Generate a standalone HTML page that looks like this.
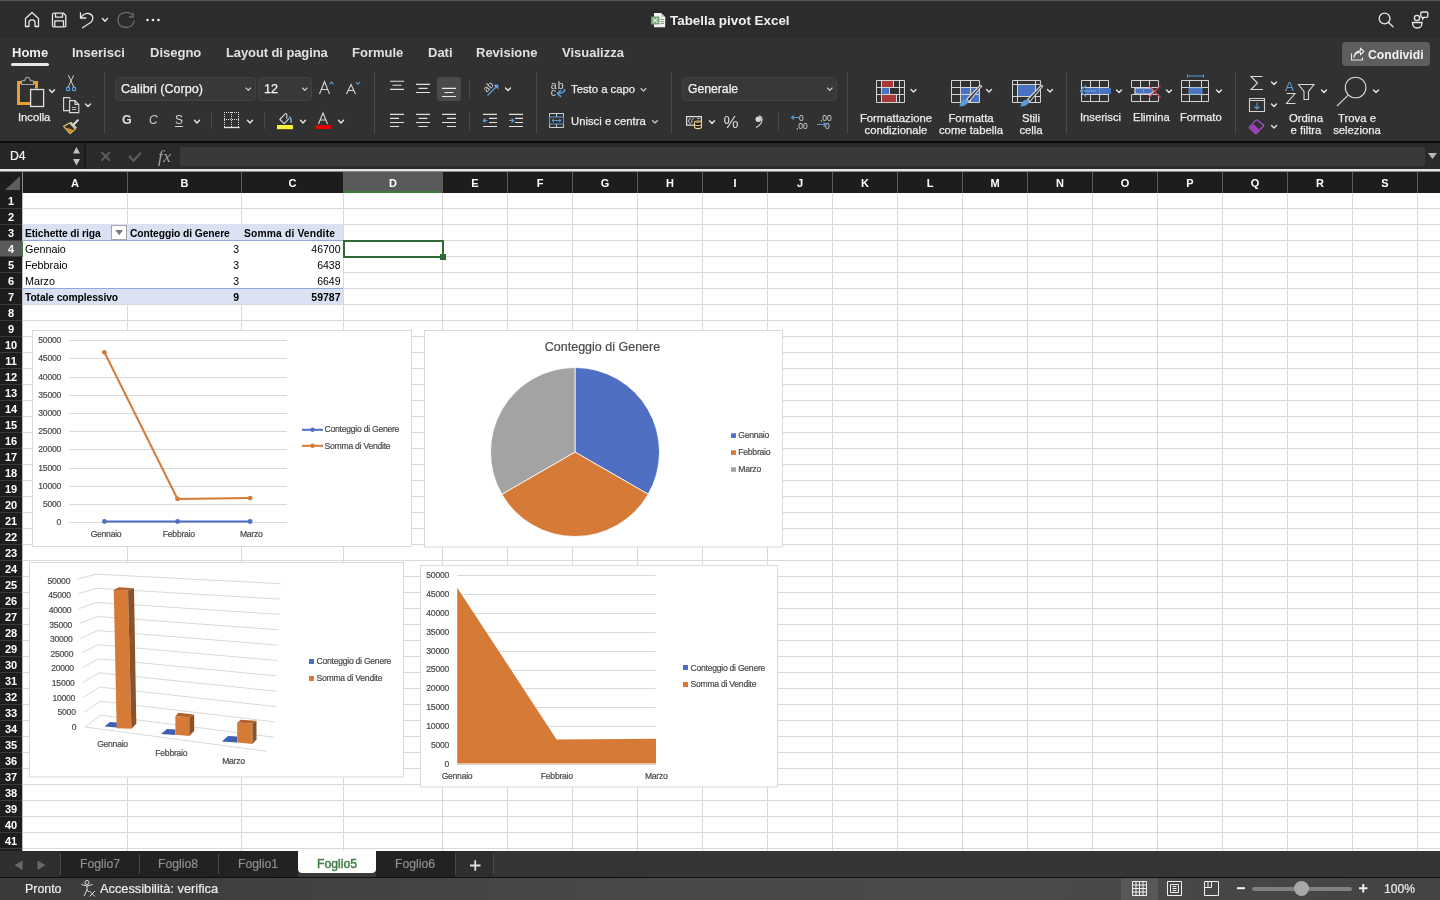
<!DOCTYPE html><html><head><meta charset="utf-8"><style>
*{margin:0;padding:0;box-sizing:border-box}
html,body{width:1440px;height:900px;overflow:hidden;background:#fff;font-family:"Liberation Sans", sans-serif}
.a{position:absolute}
.t{position:absolute;white-space:pre;line-height:1;will-change:transform}
svg{will-change:transform}
</style></head><body>
<div class="a" style="left:0;top:0;width:1440px;height:38px;background:#2c2c2c"></div>
<div class="a" style="left:0;top:0;width:1440px;height:1px;background:#555"></div>
<div class="a" style="left:0;top:38px;width:1440px;height:103px;background:#313131"></div>
<div class="a" style="left:0;top:141px;width:1440px;height:2px;background:#0c0c0c"></div>
<div class="a" style="left:0;top:143px;width:1440px;height:26px;background:#2a2a2a"></div>
<div class="a" style="left:0;top:193px;width:1440px;height:658px;background:#fff"></div>
<div class="a" style="left:23px;top:208px;width:1417px;height:1px;background:#d9d9d9"></div>
<div class="a" style="left:23px;top:224px;width:1417px;height:1px;background:#d9d9d9"></div>
<div class="a" style="left:23px;top:240px;width:1417px;height:1px;background:#d9d9d9"></div>
<div class="a" style="left:23px;top:256px;width:1417px;height:1px;background:#d9d9d9"></div>
<div class="a" style="left:23px;top:272px;width:1417px;height:1px;background:#d9d9d9"></div>
<div class="a" style="left:23px;top:288px;width:1417px;height:1px;background:#d9d9d9"></div>
<div class="a" style="left:23px;top:304px;width:1417px;height:1px;background:#d9d9d9"></div>
<div class="a" style="left:23px;top:320px;width:1417px;height:1px;background:#d9d9d9"></div>
<div class="a" style="left:23px;top:336px;width:1417px;height:1px;background:#d9d9d9"></div>
<div class="a" style="left:23px;top:352px;width:1417px;height:1px;background:#d9d9d9"></div>
<div class="a" style="left:23px;top:368px;width:1417px;height:1px;background:#d9d9d9"></div>
<div class="a" style="left:23px;top:384px;width:1417px;height:1px;background:#d9d9d9"></div>
<div class="a" style="left:23px;top:400px;width:1417px;height:1px;background:#d9d9d9"></div>
<div class="a" style="left:23px;top:416px;width:1417px;height:1px;background:#d9d9d9"></div>
<div class="a" style="left:23px;top:432px;width:1417px;height:1px;background:#d9d9d9"></div>
<div class="a" style="left:23px;top:448px;width:1417px;height:1px;background:#d9d9d9"></div>
<div class="a" style="left:23px;top:464px;width:1417px;height:1px;background:#d9d9d9"></div>
<div class="a" style="left:23px;top:480px;width:1417px;height:1px;background:#d9d9d9"></div>
<div class="a" style="left:23px;top:496px;width:1417px;height:1px;background:#d9d9d9"></div>
<div class="a" style="left:23px;top:512px;width:1417px;height:1px;background:#d9d9d9"></div>
<div class="a" style="left:23px;top:528px;width:1417px;height:1px;background:#d9d9d9"></div>
<div class="a" style="left:23px;top:544px;width:1417px;height:1px;background:#d9d9d9"></div>
<div class="a" style="left:23px;top:560px;width:1417px;height:1px;background:#d9d9d9"></div>
<div class="a" style="left:23px;top:576px;width:1417px;height:1px;background:#d9d9d9"></div>
<div class="a" style="left:23px;top:592px;width:1417px;height:1px;background:#d9d9d9"></div>
<div class="a" style="left:23px;top:608px;width:1417px;height:1px;background:#d9d9d9"></div>
<div class="a" style="left:23px;top:624px;width:1417px;height:1px;background:#d9d9d9"></div>
<div class="a" style="left:23px;top:640px;width:1417px;height:1px;background:#d9d9d9"></div>
<div class="a" style="left:23px;top:656px;width:1417px;height:1px;background:#d9d9d9"></div>
<div class="a" style="left:23px;top:672px;width:1417px;height:1px;background:#d9d9d9"></div>
<div class="a" style="left:23px;top:688px;width:1417px;height:1px;background:#d9d9d9"></div>
<div class="a" style="left:23px;top:704px;width:1417px;height:1px;background:#d9d9d9"></div>
<div class="a" style="left:23px;top:720px;width:1417px;height:1px;background:#d9d9d9"></div>
<div class="a" style="left:23px;top:736px;width:1417px;height:1px;background:#d9d9d9"></div>
<div class="a" style="left:23px;top:752px;width:1417px;height:1px;background:#d9d9d9"></div>
<div class="a" style="left:23px;top:768px;width:1417px;height:1px;background:#d9d9d9"></div>
<div class="a" style="left:23px;top:784px;width:1417px;height:1px;background:#d9d9d9"></div>
<div class="a" style="left:23px;top:800px;width:1417px;height:1px;background:#d9d9d9"></div>
<div class="a" style="left:23px;top:816px;width:1417px;height:1px;background:#d9d9d9"></div>
<div class="a" style="left:23px;top:832px;width:1417px;height:1px;background:#d9d9d9"></div>
<div class="a" style="left:23px;top:848px;width:1417px;height:1px;background:#d9d9d9"></div>
<div class="a" style="left:127px;top:193px;width:1px;height:658px;background:#d9d9d9"></div>
<div class="a" style="left:241px;top:193px;width:1px;height:658px;background:#d9d9d9"></div>
<div class="a" style="left:343px;top:193px;width:1px;height:658px;background:#d9d9d9"></div>
<div class="a" style="left:442px;top:193px;width:1px;height:658px;background:#d9d9d9"></div>
<div class="a" style="left:507px;top:193px;width:1px;height:658px;background:#d9d9d9"></div>
<div class="a" style="left:572px;top:193px;width:1px;height:658px;background:#d9d9d9"></div>
<div class="a" style="left:637px;top:193px;width:1px;height:658px;background:#d9d9d9"></div>
<div class="a" style="left:702px;top:193px;width:1px;height:658px;background:#d9d9d9"></div>
<div class="a" style="left:767px;top:193px;width:1px;height:658px;background:#d9d9d9"></div>
<div class="a" style="left:832px;top:193px;width:1px;height:658px;background:#d9d9d9"></div>
<div class="a" style="left:897px;top:193px;width:1px;height:658px;background:#d9d9d9"></div>
<div class="a" style="left:962px;top:193px;width:1px;height:658px;background:#d9d9d9"></div>
<div class="a" style="left:1027px;top:193px;width:1px;height:658px;background:#d9d9d9"></div>
<div class="a" style="left:1092px;top:193px;width:1px;height:658px;background:#d9d9d9"></div>
<div class="a" style="left:1157px;top:193px;width:1px;height:658px;background:#d9d9d9"></div>
<div class="a" style="left:1222px;top:193px;width:1px;height:658px;background:#d9d9d9"></div>
<div class="a" style="left:1287px;top:193px;width:1px;height:658px;background:#d9d9d9"></div>
<div class="a" style="left:1352px;top:193px;width:1px;height:658px;background:#d9d9d9"></div>
<div class="a" style="left:1417px;top:193px;width:1px;height:658px;background:#d9d9d9"></div>
<div class="a" style="left:0;top:169px;width:1440px;height:2px;background:#e4e4e4"></div><div class="a" style="left:0;top:171px;width:1440px;height:1px;background:#8a8a8a"></div>
<div class="a" style="left:0;top:172px;width:1440px;height:21px;background:#1d1d1d"></div>
<div class="t" style="left:23px;top:177.6px;width:104px;text-align:center;font-size:11px;font-weight:bold;color:#fff">A</div>
<div class="a" style="left:127px;top:172px;width:1px;height:21px;background:#5c5c5c"></div>
<div class="t" style="left:128px;top:177.6px;width:113px;text-align:center;font-size:11px;font-weight:bold;color:#fff">B</div>
<div class="a" style="left:241px;top:172px;width:1px;height:21px;background:#5c5c5c"></div>
<div class="t" style="left:242px;top:177.6px;width:101px;text-align:center;font-size:11px;font-weight:bold;color:#fff">C</div>
<div class="a" style="left:343px;top:172px;width:1px;height:21px;background:#5c5c5c"></div>
<div class="a" style="left:344px;top:172px;width:98px;height:21px;background:#5a5a5a;border-bottom:2px solid #3c7a3c"></div>
<div class="t" style="left:344px;top:177.6px;width:98px;text-align:center;font-size:11px;font-weight:bold;color:#fff">D</div>
<div class="a" style="left:442px;top:172px;width:1px;height:21px;background:#5c5c5c"></div>
<div class="t" style="left:443px;top:177.6px;width:64px;text-align:center;font-size:11px;font-weight:bold;color:#fff">E</div>
<div class="a" style="left:507px;top:172px;width:1px;height:21px;background:#5c5c5c"></div>
<div class="t" style="left:508px;top:177.6px;width:64px;text-align:center;font-size:11px;font-weight:bold;color:#fff">F</div>
<div class="a" style="left:572px;top:172px;width:1px;height:21px;background:#5c5c5c"></div>
<div class="t" style="left:573px;top:177.6px;width:64px;text-align:center;font-size:11px;font-weight:bold;color:#fff">G</div>
<div class="a" style="left:637px;top:172px;width:1px;height:21px;background:#5c5c5c"></div>
<div class="t" style="left:638px;top:177.6px;width:64px;text-align:center;font-size:11px;font-weight:bold;color:#fff">H</div>
<div class="a" style="left:702px;top:172px;width:1px;height:21px;background:#5c5c5c"></div>
<div class="t" style="left:703px;top:177.6px;width:64px;text-align:center;font-size:11px;font-weight:bold;color:#fff">I</div>
<div class="a" style="left:767px;top:172px;width:1px;height:21px;background:#5c5c5c"></div>
<div class="t" style="left:768px;top:177.6px;width:64px;text-align:center;font-size:11px;font-weight:bold;color:#fff">J</div>
<div class="a" style="left:832px;top:172px;width:1px;height:21px;background:#5c5c5c"></div>
<div class="t" style="left:833px;top:177.6px;width:64px;text-align:center;font-size:11px;font-weight:bold;color:#fff">K</div>
<div class="a" style="left:897px;top:172px;width:1px;height:21px;background:#5c5c5c"></div>
<div class="t" style="left:898px;top:177.6px;width:64px;text-align:center;font-size:11px;font-weight:bold;color:#fff">L</div>
<div class="a" style="left:962px;top:172px;width:1px;height:21px;background:#5c5c5c"></div>
<div class="t" style="left:963px;top:177.6px;width:64px;text-align:center;font-size:11px;font-weight:bold;color:#fff">M</div>
<div class="a" style="left:1027px;top:172px;width:1px;height:21px;background:#5c5c5c"></div>
<div class="t" style="left:1028px;top:177.6px;width:64px;text-align:center;font-size:11px;font-weight:bold;color:#fff">N</div>
<div class="a" style="left:1092px;top:172px;width:1px;height:21px;background:#5c5c5c"></div>
<div class="t" style="left:1093px;top:177.6px;width:64px;text-align:center;font-size:11px;font-weight:bold;color:#fff">O</div>
<div class="a" style="left:1157px;top:172px;width:1px;height:21px;background:#5c5c5c"></div>
<div class="t" style="left:1158px;top:177.6px;width:64px;text-align:center;font-size:11px;font-weight:bold;color:#fff">P</div>
<div class="a" style="left:1222px;top:172px;width:1px;height:21px;background:#5c5c5c"></div>
<div class="t" style="left:1223px;top:177.6px;width:64px;text-align:center;font-size:11px;font-weight:bold;color:#fff">Q</div>
<div class="a" style="left:1287px;top:172px;width:1px;height:21px;background:#5c5c5c"></div>
<div class="t" style="left:1288px;top:177.6px;width:64px;text-align:center;font-size:11px;font-weight:bold;color:#fff">R</div>
<div class="a" style="left:1352px;top:172px;width:1px;height:21px;background:#5c5c5c"></div>
<div class="t" style="left:1353px;top:177.6px;width:64px;text-align:center;font-size:11px;font-weight:bold;color:#fff">S</div>
<div class="a" style="left:1417px;top:172px;width:1px;height:21px;background:#5c5c5c"></div>
<div class="a" style="left:0;top:193px;width:22px;height:658px;background:#1d1d1d"></div>
<div class="a" style="left:22px;top:193px;width:1px;height:658px;background:#bdbdbd"></div>
<div class="t" style="left:0;top:196px;width:22px;text-align:center;font-size:11px;font-weight:bold;color:#fff">1</div>
<div class="a" style="left:0;top:208px;width:22px;height:1px;background:#3a3a3a"></div>
<div class="t" style="left:0;top:212px;width:22px;text-align:center;font-size:11px;font-weight:bold;color:#fff">2</div>
<div class="a" style="left:0;top:224px;width:22px;height:1px;background:#3a3a3a"></div>
<div class="t" style="left:0;top:228px;width:22px;text-align:center;font-size:11px;font-weight:bold;color:#fff">3</div>
<div class="a" style="left:0;top:240px;width:22px;height:1px;background:#3a3a3a"></div>
<div class="a" style="left:0;top:241px;width:23px;height:16px;background:#5a5a5a;border-right:2px solid #3c7a3c"></div>
<div class="t" style="left:0;top:244px;width:22px;text-align:center;font-size:11px;font-weight:bold;color:#fff">4</div>
<div class="a" style="left:0;top:256px;width:22px;height:1px;background:#3a3a3a"></div>
<div class="t" style="left:0;top:260px;width:22px;text-align:center;font-size:11px;font-weight:bold;color:#fff">5</div>
<div class="a" style="left:0;top:272px;width:22px;height:1px;background:#3a3a3a"></div>
<div class="t" style="left:0;top:276px;width:22px;text-align:center;font-size:11px;font-weight:bold;color:#fff">6</div>
<div class="a" style="left:0;top:288px;width:22px;height:1px;background:#3a3a3a"></div>
<div class="t" style="left:0;top:292px;width:22px;text-align:center;font-size:11px;font-weight:bold;color:#fff">7</div>
<div class="a" style="left:0;top:304px;width:22px;height:1px;background:#3a3a3a"></div>
<div class="t" style="left:0;top:308px;width:22px;text-align:center;font-size:11px;font-weight:bold;color:#fff">8</div>
<div class="a" style="left:0;top:320px;width:22px;height:1px;background:#3a3a3a"></div>
<div class="t" style="left:0;top:324px;width:22px;text-align:center;font-size:11px;font-weight:bold;color:#fff">9</div>
<div class="a" style="left:0;top:336px;width:22px;height:1px;background:#3a3a3a"></div>
<div class="t" style="left:0;top:340px;width:22px;text-align:center;font-size:11px;font-weight:bold;color:#fff">10</div>
<div class="a" style="left:0;top:352px;width:22px;height:1px;background:#3a3a3a"></div>
<div class="t" style="left:0;top:356px;width:22px;text-align:center;font-size:11px;font-weight:bold;color:#fff">11</div>
<div class="a" style="left:0;top:368px;width:22px;height:1px;background:#3a3a3a"></div>
<div class="t" style="left:0;top:372px;width:22px;text-align:center;font-size:11px;font-weight:bold;color:#fff">12</div>
<div class="a" style="left:0;top:384px;width:22px;height:1px;background:#3a3a3a"></div>
<div class="t" style="left:0;top:388px;width:22px;text-align:center;font-size:11px;font-weight:bold;color:#fff">13</div>
<div class="a" style="left:0;top:400px;width:22px;height:1px;background:#3a3a3a"></div>
<div class="t" style="left:0;top:404px;width:22px;text-align:center;font-size:11px;font-weight:bold;color:#fff">14</div>
<div class="a" style="left:0;top:416px;width:22px;height:1px;background:#3a3a3a"></div>
<div class="t" style="left:0;top:420px;width:22px;text-align:center;font-size:11px;font-weight:bold;color:#fff">15</div>
<div class="a" style="left:0;top:432px;width:22px;height:1px;background:#3a3a3a"></div>
<div class="t" style="left:0;top:436px;width:22px;text-align:center;font-size:11px;font-weight:bold;color:#fff">16</div>
<div class="a" style="left:0;top:448px;width:22px;height:1px;background:#3a3a3a"></div>
<div class="t" style="left:0;top:452px;width:22px;text-align:center;font-size:11px;font-weight:bold;color:#fff">17</div>
<div class="a" style="left:0;top:464px;width:22px;height:1px;background:#3a3a3a"></div>
<div class="t" style="left:0;top:468px;width:22px;text-align:center;font-size:11px;font-weight:bold;color:#fff">18</div>
<div class="a" style="left:0;top:480px;width:22px;height:1px;background:#3a3a3a"></div>
<div class="t" style="left:0;top:484px;width:22px;text-align:center;font-size:11px;font-weight:bold;color:#fff">19</div>
<div class="a" style="left:0;top:496px;width:22px;height:1px;background:#3a3a3a"></div>
<div class="t" style="left:0;top:500px;width:22px;text-align:center;font-size:11px;font-weight:bold;color:#fff">20</div>
<div class="a" style="left:0;top:512px;width:22px;height:1px;background:#3a3a3a"></div>
<div class="t" style="left:0;top:516px;width:22px;text-align:center;font-size:11px;font-weight:bold;color:#fff">21</div>
<div class="a" style="left:0;top:528px;width:22px;height:1px;background:#3a3a3a"></div>
<div class="t" style="left:0;top:532px;width:22px;text-align:center;font-size:11px;font-weight:bold;color:#fff">22</div>
<div class="a" style="left:0;top:544px;width:22px;height:1px;background:#3a3a3a"></div>
<div class="t" style="left:0;top:548px;width:22px;text-align:center;font-size:11px;font-weight:bold;color:#fff">23</div>
<div class="a" style="left:0;top:560px;width:22px;height:1px;background:#3a3a3a"></div>
<div class="t" style="left:0;top:564px;width:22px;text-align:center;font-size:11px;font-weight:bold;color:#fff">24</div>
<div class="a" style="left:0;top:576px;width:22px;height:1px;background:#3a3a3a"></div>
<div class="t" style="left:0;top:580px;width:22px;text-align:center;font-size:11px;font-weight:bold;color:#fff">25</div>
<div class="a" style="left:0;top:592px;width:22px;height:1px;background:#3a3a3a"></div>
<div class="t" style="left:0;top:596px;width:22px;text-align:center;font-size:11px;font-weight:bold;color:#fff">26</div>
<div class="a" style="left:0;top:608px;width:22px;height:1px;background:#3a3a3a"></div>
<div class="t" style="left:0;top:612px;width:22px;text-align:center;font-size:11px;font-weight:bold;color:#fff">27</div>
<div class="a" style="left:0;top:624px;width:22px;height:1px;background:#3a3a3a"></div>
<div class="t" style="left:0;top:628px;width:22px;text-align:center;font-size:11px;font-weight:bold;color:#fff">28</div>
<div class="a" style="left:0;top:640px;width:22px;height:1px;background:#3a3a3a"></div>
<div class="t" style="left:0;top:644px;width:22px;text-align:center;font-size:11px;font-weight:bold;color:#fff">29</div>
<div class="a" style="left:0;top:656px;width:22px;height:1px;background:#3a3a3a"></div>
<div class="t" style="left:0;top:660px;width:22px;text-align:center;font-size:11px;font-weight:bold;color:#fff">30</div>
<div class="a" style="left:0;top:672px;width:22px;height:1px;background:#3a3a3a"></div>
<div class="t" style="left:0;top:676px;width:22px;text-align:center;font-size:11px;font-weight:bold;color:#fff">31</div>
<div class="a" style="left:0;top:688px;width:22px;height:1px;background:#3a3a3a"></div>
<div class="t" style="left:0;top:692px;width:22px;text-align:center;font-size:11px;font-weight:bold;color:#fff">32</div>
<div class="a" style="left:0;top:704px;width:22px;height:1px;background:#3a3a3a"></div>
<div class="t" style="left:0;top:708px;width:22px;text-align:center;font-size:11px;font-weight:bold;color:#fff">33</div>
<div class="a" style="left:0;top:720px;width:22px;height:1px;background:#3a3a3a"></div>
<div class="t" style="left:0;top:724px;width:22px;text-align:center;font-size:11px;font-weight:bold;color:#fff">34</div>
<div class="a" style="left:0;top:736px;width:22px;height:1px;background:#3a3a3a"></div>
<div class="t" style="left:0;top:740px;width:22px;text-align:center;font-size:11px;font-weight:bold;color:#fff">35</div>
<div class="a" style="left:0;top:752px;width:22px;height:1px;background:#3a3a3a"></div>
<div class="t" style="left:0;top:756px;width:22px;text-align:center;font-size:11px;font-weight:bold;color:#fff">36</div>
<div class="a" style="left:0;top:768px;width:22px;height:1px;background:#3a3a3a"></div>
<div class="t" style="left:0;top:772px;width:22px;text-align:center;font-size:11px;font-weight:bold;color:#fff">37</div>
<div class="a" style="left:0;top:784px;width:22px;height:1px;background:#3a3a3a"></div>
<div class="t" style="left:0;top:788px;width:22px;text-align:center;font-size:11px;font-weight:bold;color:#fff">38</div>
<div class="a" style="left:0;top:800px;width:22px;height:1px;background:#3a3a3a"></div>
<div class="t" style="left:0;top:804px;width:22px;text-align:center;font-size:11px;font-weight:bold;color:#fff">39</div>
<div class="a" style="left:0;top:816px;width:22px;height:1px;background:#3a3a3a"></div>
<div class="t" style="left:0;top:820px;width:22px;text-align:center;font-size:11px;font-weight:bold;color:#fff">40</div>
<div class="a" style="left:0;top:832px;width:22px;height:1px;background:#3a3a3a"></div>
<div class="t" style="left:0;top:836px;width:22px;text-align:center;font-size:11px;font-weight:bold;color:#fff">41</div>
<div class="a" style="left:0;top:848px;width:22px;height:1px;background:#3a3a3a"></div>
<div class="a" style="left:0;top:172px;width:22px;height:21px;background:#1d1d1d"></div>
<svg class="a" style="left:0;top:172px" width="23" height="21"><polygon points="5,18 20,18 20,4" fill="#5e5e5e"/><rect x="22" y="0" width="1" height="21" fill="#8a8a8a"/></svg>
<!-- title bar -->
<svg class="a" style="left:0;top:0" width="200" height="38" fill="none" stroke="#e8e8e8" stroke-width="1.3" stroke-linejoin="round">
  <path d="M25.5 26.5 V18.5 L32 12.5 L38.5 18.5 V26.5 H35 V22.5 Q35 19.8 32 19.8 Q29 19.8 29 22.5 V26.5 Z"/>
  <path d="M52.5 14.5 Q52.5 13.2 53.8 13.2 H63.5 L65.8 15.5 V25.8 Q65.8 26.8 64.8 26.8 H53.5 Q52.5 26.8 52.5 25.8 Z"/>
  <path d="M55.5 13.5 V17.2 H62.5 V13.5"/>
  <path d="M54.8 26.5 V20.8 H63.5 V26.5"/>
  <path d="M80.5 12.8 V18 H85.8" stroke-linecap="round"/>
  <path d="M80.8 17.8 Q84 13 88.5 13.5 Q93 14.5 92.8 18.5 Q92.6 20.5 91 22.3 L82.5 27.8" stroke-linecap="round"/>
  <path d="M102.5 18.5 L105 21.2 L107.5 18.5" stroke-width="1.4" stroke-linecap="round"/>
  <path d="M132.6 15.5 Q130.5 12.3 126 12.4 Q118.2 13 118 20 Q118.3 27.2 126 27.5 Q133.3 27.3 134.2 20.5" stroke="#6b6b6b"/>
  <path d="M133.2 12.8 V17 H129" stroke="#6b6b6b"/>
  <circle cx="147.5" cy="20" r="1.3" fill="#e8e8e8" stroke="none"/>
  <circle cx="153" cy="20" r="1.3" fill="#e8e8e8" stroke="none"/>
  <circle cx="158.5" cy="20" r="1.3" fill="#e8e8e8" stroke="none"/>
</svg>
<svg class="a" style="left:648px;top:10px" width="20" height="20">
  <path d="M6 3 H13 L17.2 7.2 V17.3 H6 Z" fill="#f2f2f2"/>
  <path d="M13 3 V7.2 H17.2" fill="#cfcfcf"/>
  <rect x="3" y="6.5" width="8.5" height="8" fill="#7aa37a"/>
  <path d="M5 8.5 L9.5 12.5 M9.5 8.5 L5 12.5" stroke="#e8f0e8" stroke-width="1.1"/>
  <path d="M12.5 9.5 H16 M12.5 11.5 H16 M12.5 13.5 H16" stroke="#7aa37a" stroke-width="1"/>
</svg>
<div class="t" style="left:670px;top:13.8px;font-size:13.4px;font-weight:bold;color:#f0f0f0">Tabella pivot Excel</div>
<svg class="a" style="left:1370px;top:6px" width="70" height="28" fill="none" stroke="#e8e8e8" stroke-width="1.3">
  <circle cx="14.6" cy="12.5" r="5.4"/>
  <path d="M18.5 16.5 L23 20.8" stroke-linecap="round"/>
  <circle cx="47" cy="12" r="2.6"/>
  <path d="M42.5 16.5 H52 Q52 22 47.2 22 Q42.5 22 42.5 16.5 Z"/>
  <path d="M50.8 7 Q50.8 6 51.8 6 H56.8 Q57.8 6 57.8 7 V10.3 Q57.8 11.3 56.8 11.3 H54 L52.8 13 L52.6 11.3 H51.8 Q50.8 11.3 50.8 10.3 Z"/>
</svg>
<!-- tabs -->
<div class="t" style="left:11.5px;top:45.5px;font-size:13px;font-weight:bold;color:#f0f0f0">Home</div>
<div class="a" style="left:11px;top:63px;width:38px;height:3px;border-radius:2px;background:#e6e6e6"></div>
<div class="t" style="left:72px;top:45.5px;font-size:13px;font-weight:bold;color:#e0e0e0">Inserisci</div>
<div class="t" style="left:149.5px;top:45.5px;font-size:13px;font-weight:bold;color:#e0e0e0">Disegno</div>
<div class="t" style="left:226px;top:45.5px;font-size:13px;font-weight:bold;color:#e0e0e0;letter-spacing:-0.1px">Layout di pagina</div>
<div class="t" style="left:352px;top:45.5px;font-size:13px;font-weight:bold;color:#e0e0e0">Formule</div>
<div class="t" style="left:427.5px;top:45.5px;font-size:13px;font-weight:bold;color:#e0e0e0">Dati</div>
<div class="t" style="left:476px;top:45.5px;font-size:13px;font-weight:bold;color:#e0e0e0">Revisione</div>
<div class="t" style="left:561.5px;top:45.5px;font-size:13px;font-weight:bold;color:#e0e0e0">Visualizza</div>
<div class="a" style="left:1342px;top:42px;width:88px;height:24px;border-radius:4px;background:#5e5e5e"></div>
<svg class="a" style="left:1350px;top:47px" width="16" height="15" fill="none" stroke="#e8e8e8" stroke-width="1.1">
  <path d="M1.5 6.5 V13 H12.5 V10.5"/>
  <path d="M4 10.5 Q5 5.5 10.5 5.2 V7.8 L13.8 4.5 L10.5 1.2 V3.6 Q4.5 4.5 4 10.5 Z" stroke-linejoin="round"/>
</svg>
<div class="t" style="left:1368px;top:48.5px;font-size:12.2px;font-weight:bold;color:#f2f2f2">Condividi</div>

<!-- ribbon boxes -->
<div class="a" style="left:115px;top:77px;width:141px;height:24px;border-radius:4px;background:#383838;border:1px solid #424242"></div>
<div class="a" style="left:258px;top:77px;width:54px;height:24px;border-radius:4px;background:#383838;border:1px solid #424242"></div>
<div class="a" style="left:682px;top:77px;width:155px;height:24px;border-radius:4px;background:#383838;border:1px solid #424242"></div>
<!-- ribbon -->
<svg class="a" style="left:0;top:0" width="1440" height="141" fill="none" stroke="#dcdcdc" stroke-width="1.2">
  <!-- separators -->
  <g stroke="#4a4a4a" stroke-width="1">
    <path d="M104.5 72 V134 M374.5 72 V134 M536.5 72 V134 M671.5 72 V134 M847.5 72 V134 M1066.5 72 V134 M1235.5 72 V134"/>
    <path d="M211.5 112 V129 M264.5 112 V129 M469.5 80 V98 M469.5 112 V130 M778.5 112.5 V130"/>
  </g>
  <!-- clipboard -->
  <path d="M22 82.4 H18.5 V103.6 H30 M32 82.4 H36.5 V88.5" stroke="#e8a030" stroke-width="3"/>
  <path d="M21.5 84.5 V81.5 Q21.5 80.8 22.2 80.8 H24.5 Q25.5 77.3 27.5 77.3 Q29.5 77.3 30.5 80.8 H32.8 Q33.5 80.8 33.5 81.5 V84.5 Z" stroke="#a8a8a8" stroke-width="1.1" fill="#313131"/>
  <rect x="30.6" y="89.5" width="13" height="17" stroke="#e0e0e0" stroke-width="1.3"/>
  <!-- chevrons -->
  <g stroke="#e6e6e6" stroke-width="1.4" stroke-linecap="round" stroke-linejoin="round">
    <path d="M49.5 89.8 L52 92.5 L54.5 89.8"/>
    <path d="M85.5 104 L88 106.5 L90.5 104"/>
    <path d="M194.5 120.3 L197 123 L199.5 120.3"/>
    <path d="M247.5 120.3 L250 123 L252.5 120.3"/>
    <path d="M300.5 120.3 L303 123 L305.5 120.3"/>
    <path d="M338.5 120.3 L341 123 L343.5 120.3"/>
    <path d="M505.5 88 L508 90.5 L510.5 88"/>
    <path d="M709.5 120.8 L712 123.5 L714.5 120.8"/>
    <path d="M911 89.5 L913.5 92 L916 89.5"/>
    <path d="M986.5 89.5 L989 92 L991.5 89.5"/>
    <path d="M1047.5 89.5 L1050 92 L1052.5 89.5"/>
    <path d="M1116.5 90 L1119 92.5 L1121.5 90"/>
    <path d="M1166.5 90 L1169 92.5 L1171.5 90"/>
    <path d="M1216.5 90 L1219 92.5 L1221.5 90"/>
    <path d="M1271.5 82 L1274 84.5 L1276.5 82"/>
    <path d="M1271.5 104 L1274 106.5 L1276.5 104"/>
    <path d="M1271.5 125.5 L1274 128 L1276.5 125.5"/>
    <path d="M1321.5 90 L1324 92.5 L1326.5 90"/>
    <path d="M1373.5 90 L1376 92.5 L1378.5 90"/>
  </g>
  <g stroke="#d0d0d0" stroke-width="1.1" stroke-linecap="round" stroke-linejoin="round">
    <path d="M246 88 L248.3 90.3 L250.6 88"/>
    <path d="M302.5 88 L304.8 90.3 L307.1 88"/>
    <path d="M641 88.5 L643.5 91 L646 88.5"/>
    <path d="M652.5 120.5 L655 123 L657.5 120.5"/>
    <path d="M827.5 88 L829.8 90.3 L832.1 88"/>
  </g>
  <!-- scissors -->
  <path d="M68.4 75.3 L73.8 87.2 M73.6 75.3 L68.2 87.2" stroke="#d0d0d0" stroke-width="1"/>
  <rect x="66.5" y="87.4" width="3.2" height="3.2" rx="1" stroke="#5ea4f0" stroke-width="1.1"/>
  <rect x="72.5" y="87.4" width="3.2" height="3.2" rx="1" stroke="#5ea4f0" stroke-width="1.1"/>
  <!-- copy -->
  <path d="M69 110.6 H63.6 V97.6 H69.2 L70.6 99" stroke="#dcdcdc" stroke-width="1.1"/>
  <path d="M69.6 100.6 H75 L78.8 104.4 V112.6 H69.6 Z M75 100.6 V104.4 H78.8" stroke="#dcdcdc" stroke-width="1.1"/>
  <path d="M72 107.5 H76.2 M72 109.5 H76.2" stroke="#dcdcdc" stroke-width="0.8"/>
  <!-- format painter -->
  <path d="M63.6 126.3 L69.7 123.1 L75.3 129.2 L70.1 133.7 Z" fill="#313131" stroke="#f0d070" stroke-width="1.1" stroke-linejoin="round"/>
  <path d="M65.5 127.5 Q70 128.5 73.5 130 L70 133 Z" fill="#d89020" stroke="none"/>
  <path d="M70.5 122.3 L76.4 128.3" stroke="#d8d8d8" stroke-width="1.6"/>
  <path d="M73.2 125 L77.8 120.3" stroke="#d8d8d8" stroke-width="2.2" stroke-linecap="round"/>
<!-- font grow/shrink -->
  <path d="M319.5 94 L324.5 81.5 L329.5 94 M321.3 89.5 H327.7" stroke="#d8d8d8" stroke-width="1.1"/>
  <path d="M329.5 84.5 L331.5 82 L333.5 84.5" stroke="#5b9bd5" stroke-width="1.1"/>
  <path d="M346.5 94 L351 84.5 L355.5 94 M348 90.5 H354" stroke="#d8d8d8" stroke-width="1.1"/>
  <path d="M356 82 L358 84.3 L360 82" stroke="#5b9bd5" stroke-width="1.1"/>
  <!-- borders -->
  <path d="M224 112.5 H240 M224 119.5 H240 M224.5 112 V127 M231.5 112 V127 M238.5 112 V127" stroke="#e0e0e0" stroke-width="1" stroke-dasharray="1 1"/>
  <path d="M224 127.5 H239.5" stroke="#e8e8e8" stroke-width="1.3"/>
  <!-- fill color -->
  <path d="M289 118.6 L284.3 123.6 L279.8 119.5 L284.8 114.2 Q285.8 112.8 286.8 114.2 V118.8" stroke="#dadada" stroke-width="1.1" stroke-linejoin="round"/>
  <path d="M289.2 116.6 Q291.8 118.5 290.9 123" stroke="#8ab8f0" stroke-width="1.3"/>
  <rect x="277" y="125" width="16" height="4.2" fill="#f7f03a" stroke="none"/>
  <!-- font color -->
  <path d="M318.5 124 L323 113 L327.5 124 M320 120 H326" stroke="#d8d8d8" stroke-width="1.1"/>
  <rect x="315" y="125" width="16" height="4" fill="#e00000" stroke="none"/>
  <!-- vertical align -->
  <g stroke="#e0e0e0" stroke-width="1.1">
    <path d="M390 81.3 H404 M392.5 85.3 H401.5 M390 89.4 H404"/>
    <path d="M416 84.4 H430 M418.5 88.4 H427.5 M416 92.5 H430"/>
  </g>
  <rect x="437" y="77" width="24" height="24" rx="3" fill="#4a4a4a" stroke="none"/>
  <path d="M442 88.4 H456 M444.5 92.5 H453.5 M442 96.5 H456" stroke="#e6e6e6" stroke-width="1.1"/>
  <!-- horizontal align -->
  <g stroke="#e0e0e0" stroke-width="1.1">
    <path d="M390 114.4 H404 M390 118.4 H399 M390 122.5 H404 M390 126.5 H399"/>
    <path d="M416 114.4 H430 M418.5 118.4 H427.5 M416 122.5 H430 M418.5 126.5 H427.5"/>
    <path d="M442 114.4 H456 M447 118.4 H456 M442 122.5 H456 M447 126.5 H456"/>
    <path d="M483 114.4 H497 M489 118.4 H497 M489 122.5 H497 M483 126.5 H497"/>
    <path d="M509 114.4 H523 M515 118.4 H523 M515 122.5 H523 M509 126.5 H523"/>
  </g>
  <path d="M487.5 120.5 H483.5 M485.5 118.5 L483.3 120.5 L485.5 122.5" stroke="#5b9bd5" stroke-width="1.2"/>
  <path d="M509 120.5 H513.5 M511.5 118.5 L513.7 120.5 L511.5 122.5" stroke="#5b9bd5" stroke-width="1.2"/>
  <!-- orientation -->
  <text x="0" y="0" transform="translate(486.8 92.8) rotate(-45)" font-family="Liberation Sans" font-size="9.5" fill="#d8d8d8" stroke="none">ab</text>
  <path d="M487.5 95.5 L496.5 86.5" stroke="#5ea4f0" stroke-width="1.1"/><polygon points="494,85 498,85 498,89" fill="#5ea4f0" stroke="#5ea4f0" stroke-width="0.6"/>
  <!-- wrap text -->
  <text x="550.8" y="88.8" font-family="Liberation Sans" font-size="10.6" fill="#d8d8d8" stroke="none" letter-spacing="1">ab</text>
  <text x="550.8" y="96" font-family="Liberation Sans" font-size="10.6" fill="#d8d8d8" stroke="none">c</text>
  <path d="M564.6 89.6 Q564.5 92.8 560.5 93 H557.6 M560.6 90.5 L557.5 93.4 L560.6 96.4" stroke="#5b9bd5" stroke-width="1.6" stroke-linecap="round" stroke-linejoin="round"/>
  <!-- merge -->
  <path d="M549.5 113.5 H563.5 V127.5 H549.5 Z M556.5 113.5 V117 M556.5 124 V127.5" stroke="#d0d0d0" stroke-width="1"/>
  <rect x="549.5" y="117" width="14" height="7" stroke="#5b9bd5" stroke-width="1"/>
  <path d="M552 120.5 H561 M554 118.8 L552 120.5 L554 122.2 M559 118.8 L561 120.5 L559 122.2" stroke="#5b9bd5" stroke-width="1"/>
  <!-- number group -->
  <path d="M686.6 116.6 H701.4 V125.2 H686.6 Z" stroke="#e0e0e0" stroke-width="1.2"/>
  <path d="M690.8 118.5 Q688.6 118.5 688.6 121 Q688.6 123.5 690.8 123.5 M693.8 118.5 Q691.8 118.5 691.8 121 V123 M697.2 118.5 H699.6" stroke="#d0d0d0" stroke-width="0.9"/>
  <path d="M694.5 122.5 Q694.5 121 698 121 Q701.5 121 701.5 122.5 V127 Q701.5 128.6 698 128.6 Q694.5 128.6 694.5 127 Z" fill="#1c1c1c" stroke="#f0d890" stroke-width="1.1"/>
  <path d="M694.5 125 Q698 126.5 701.5 125" stroke="#f0d890" stroke-width="1"/>
  <ellipse cx="698" cy="122.3" rx="2.2" ry="0.8" fill="#e0a030" stroke="none"/>
  <text x="723.5" y="128" font-family="Liberation Sans" font-size="17" fill="#d8d8d8" stroke="none">%</text>
  <path d="M758.5 116 Q762 116 762 119.5 Q762 124.5 756 127.5" stroke="#d8d8d8" stroke-width="1.2"/>
  <circle cx="758.3" cy="119.2" r="2.8" fill="#d8d8d8" stroke="none"/>
  <text x="799" y="120.5" font-family="Liberation Sans" font-size="8.5" fill="#d8d8d8" stroke="none">0</text>
  <text x="796" y="128.5" font-family="Liberation Sans" font-size="8.5" fill="#d8d8d8" stroke="none">,00</text>
  <path d="M791.5 117.5 H800 M794 115.5 L791.5 117.5 L794 119.5" stroke="#5b9bd5" stroke-width="1.1"/>
  <text x="820" y="120.5" font-family="Liberation Sans" font-size="8.5" fill="#d8d8d8" stroke="none">,00</text>
  <text x="825" y="128.5" font-family="Liberation Sans" font-size="8.5" fill="#d8d8d8" stroke="none">0</text>
  <path d="M817 124.5 H826 M823.5 122.5 L826 124.5 L823.5 126.5" stroke="#5b9bd5" stroke-width="1.1"/>
  <!-- conditional formatting -->
  <rect x="881" y="80.5" width="12.5" height="6.5" fill="#a83838" stroke="none"/>
  <rect x="881" y="87.5" width="8.5" height="6.5" fill="#4a72c0" stroke="none"/>
  <rect x="881" y="94.5" width="15" height="7.5" fill="#a83838" stroke="none"/>
  <path d="M876.5 80.5 H904.5 V102.5 H876.5 Z M876.5 87.5 H904.5 M876.5 94.5 H904.5 M881.5 80.5 V102.5 M893.5 80.5 V87.5 M889.5 87.5 V94.5 M896.5 94.5 V102.5 M899.5 80.5 V102.5" stroke="#d4d4d4" stroke-width="1"/>
  <!-- format as table -->
  <rect x="961" y="87.5" width="18" height="14.5" fill="#4a72c0" stroke="none"/>
  <path d="M951.5 80.5 H979.5 V102.5 H951.5 Z M951.5 87.5 H979.5 M951.5 94.5 H979.5 M960.5 80.5 V102.5 M970.5 80.5 V102.5" stroke="#d4d4d4" stroke-width="1"/>
  <path d="M966.5 99.5 L979.5 86 Q981 84.8 981.8 86.2 L969 101.5 Z" fill="#313131" stroke="#d4d4d4" stroke-width="1.1" stroke-linejoin="round"/>
  <path d="M959.3 106.6 Q960.5 100.8 964.5 99.8 Q968 100 968.3 102.2 Q966 106.3 959.3 106.6 Z" fill="#5b9bd5" stroke="none"/>
  <!-- cell styles -->
  <rect x="1017" y="85" width="18.5" height="11.5" fill="#4a72c0" stroke="none"/>
  <path d="M1012.5 80.5 H1040.5 V102.5 H1012.5 Z M1012.5 84.5 H1040.5 M1012.5 96.5 H1040.5 M1017.5 80.5 V102.5 M1035.5 80.5 V102.5" stroke="#d4d4d4" stroke-width="1"/>
  <path d="M1027.5 99.5 L1040.5 86 Q1042 84.8 1042.8 86.2 L1030 101.5 Z" fill="#313131" stroke="#d4d4d4" stroke-width="1.1" stroke-linejoin="round"/>
  <path d="M1020.3 106.6 Q1021.5 100.8 1025.5 99.8 Q1029 100 1029.3 102.2 Q1027 106.3 1020.3 106.6 Z" fill="#5b9bd5" stroke="none"/>
  <!-- insert cells -->
  <path d="M1081.5 80.5 H1108.5 V101.5 H1081.5 Z M1081.5 87.5 H1108.5 M1081.5 94.5 H1108.5 M1090.5 80.5 V101.5 M1099.5 80.5 V101.5" stroke="#d4d4d4" stroke-width="1"/>
  <rect x="1085" y="88" width="26" height="6" fill="#4a72c0" stroke="none"/>
  <path d="M1099.5 88 V94" stroke="#5b9bd5" stroke-width="1"/>
  <path d="M1096 91 H1081 M1086 85.5 L1080.5 91 L1086 96.5" stroke="#5b9bd5" stroke-width="1.3" stroke-linejoin="round"/>
  <!-- delete cells -->
  <path d="M1131.5 80.5 H1158.5 V87.5 M1131.5 80.5 V87.5 M1131.5 94.5 V101.5 H1158.5 V94.5 M1131.5 87.5 H1158.5 M1131.5 94.5 H1158.5 M1140.5 80.5 V87.5 M1149.5 80.5 V87.5 M1140.5 94.5 V101.5 M1149.5 94.5 V101.5" stroke="#d4d4d4" stroke-width="1"/>
  <polygon points="1135,88 1151,88 1154,91 1151,94 1135,94" fill="#4a72c0"/>
  <path d="M1143.5 88 V94" stroke="#5b9bd5" stroke-width="1"/>
  <path d="M1149 85.6 L1160.6 97.5 M1160.6 85.6 L1149 97.5" stroke="#c84848" stroke-width="1.2"/>
  <!-- format cells -->
  <path d="M1187.5 76 H1203.5 M1187.5 74.5 V77.5 M1203.5 74.5 V77.5" stroke="#5b9bd5" stroke-width="1"/>
  <path d="M1181.5 80.5 H1208.5 V101.5 H1181.5 Z M1181.5 87.5 H1208.5 M1181.5 94.5 H1208.5 M1189.5 80.5 V101.5 M1201.5 80.5 V101.5" stroke="#d4d4d4" stroke-width="1"/>
  <rect x="1189" y="88" width="13" height="6" fill="#4a72c0" stroke="#5b9bd5" stroke-width="0.8"/>
  <!-- editing -->
  <path d="M1262.5 76.5 H1251 L1257.5 83 L1251 89.5 H1263" stroke="#d8d8d8" stroke-width="1.1"/>
  <path d="M1249.5 98.5 H1264.5 V111.5 H1249.5 Z M1249.5 100.5 H1264.5" stroke="#d0d0d0" stroke-width="1.1"/>
  <path d="M1257 102.5 V109 M1254.5 106.5 L1257 109 L1259.5 106.5" stroke="#5b9bd5" stroke-width="1.1"/>
  <path d="M1249.5 127 L1256 120 Q1256.5 119.5 1257 120 L1263.5 125 Q1264 125.5 1263.5 126 L1256.5 133.5 Q1256 134 1255.5 133.5 L1249.5 128 Q1249 127.5 1249.5 127 Z" stroke="#b050d0" stroke-width="1.1"/>
  <path d="M1250 127.5 L1253.5 124 L1259 129.5 L1256 133 Z" fill="#a040c0" stroke="none"/>
  <text x="1285" y="91" font-family="Liberation Sans" font-size="13.5" fill="#5b9bd5" stroke="none">A</text>
  <path d="M1286.5 93.5 H1295 L1286.5 103.5 H1295.5" stroke="#d8d8d8" stroke-width="1.1"/>
  <path d="M1298.5 84.5 H1314 L1308.5 91.5 V99.5 H1304 V91.5 Z" stroke="#d8d8d8" stroke-width="1.1"/>
  <circle cx="1355.6" cy="87.5" r="10.3" stroke="#d8d8d8" stroke-width="1.1"/>
  <path d="M1348.2 95.2 L1337 106" stroke="#d8d8d8" stroke-width="1.1"/>
</svg>
<div class="t" style="left:121px;top:82.7px;font-size:12.6px;color:#f2f2f2;-webkit-text-stroke:0.25px #f2f2f2">Calibri (Corpo)</div>
<div class="t" style="left:263.5px;top:82.7px;font-size:12.6px;color:#f2f2f2;-webkit-text-stroke:0.25px #f2f2f2">12</div>
<div class="t" style="left:688px;top:82.7px;font-size:12.2px;color:#f2f2f2;-webkit-text-stroke:0.25px #f2f2f2">Generale</div>
<div class="t" style="left:121.5px;top:114.2px;font-size:12.5px;font-weight:bold;color:#e0e0e0">G</div>
<div class="t" style="left:148.5px;top:113.5px;font-size:12px;font-style:italic;color:#d0d0d0">C</div>
<div class="t" style="left:175px;top:113.5px;font-size:12px;color:#d0d0d0">S</div>
<div class="a" style="left:175px;top:126px;width:8px;height:1px;background:#d0d0d0"></div>
<div class="t" style="left:571px;top:84px;font-size:11.3px;color:#ececec;-webkit-text-stroke:0.25px #ececec">Testo a capo</div>
<div class="t" style="left:571px;top:116px;font-size:11.3px;color:#ececec;-webkit-text-stroke:0.25px #ececec">Unisci e centra</div>
<div class="t" style="left:17.5px;top:112px;font-size:11.2px;color:#ececec;-webkit-text-stroke:0.25px #ececec">Incolla</div>
<div class="t" style="left:850px;top:112px;width:92px;text-align:center;font-size:11.3px;color:#ececec;-webkit-text-stroke:0.25px #ececec;line-height:12px">Formattazione
condizionale</div>
<div class="t" style="left:926px;top:112px;width:90px;text-align:center;font-size:11.3px;color:#ececec;-webkit-text-stroke:0.25px #ececec;line-height:12px">Formatta
come tabella</div>
<div class="t" style="left:1001px;top:112px;width:60px;text-align:center;font-size:11.3px;color:#ececec;-webkit-text-stroke:0.25px #ececec;line-height:12px">Stili
cella</div>
<div class="t" style="left:1080px;top:112px;font-size:11.2px;color:#ececec;-webkit-text-stroke:0.25px #ececec">Inserisci</div>
<div class="t" style="left:1133px;top:112px;font-size:11.2px;color:#ececec;-webkit-text-stroke:0.25px #ececec">Elimina</div>
<div class="t" style="left:1180px;top:112px;font-size:11.2px;color:#ececec;-webkit-text-stroke:0.25px #ececec">Formato</div>
<div class="t" style="left:1276px;top:112px;width:60px;text-align:center;font-size:11.3px;color:#ececec;-webkit-text-stroke:0.25px #ececec;line-height:12px">Ordina
e filtra</div>
<div class="t" style="left:1327px;top:112px;width:60px;text-align:center;font-size:11.3px;color:#ececec;-webkit-text-stroke:0.25px #ececec;line-height:12px">Trova e
seleziona</div>

<!-- formula bar -->
<div class="a" style="left:0;top:143px;width:85px;height:26px;background:#262626"></div>
<div class="a" style="left:84px;top:143px;width:2px;height:26px;background:#1c1c1c"></div>
<div class="t" style="left:10.3px;top:150.2px;font-size:12.2px;color:#f4f4f4;-webkit-text-stroke:0.2px #f4f4f4">D4</div>
<svg class="a" style="left:0;top:143px" width="200" height="26">
  <polygon points="73,10.6 76.5,4 80,10.6" fill="#c4c4c4"/>
  <polygon points="73,16 76.5,22.6 80,16" fill="#c4c4c4"/>
  <path d="M101.5 9 L110 17.8 M110 9 L101.5 17.8" stroke="#5c5c5c" stroke-width="2"/>
  <path d="M129 13 L133.5 17.8 L141 9.5" stroke="#5c5c5c" stroke-width="2.2" fill="none"/>
</svg>
<div class="t" style="left:157.5px;top:147.5px;font-family:'Liberation Serif',serif;font-style:italic;font-size:17.5px;color:#a0a0a0;letter-spacing:0.3px">fx</div>
<div class="a" style="left:180px;top:147px;width:1245px;height:19px;background:#393939;border-radius:2px"></div>
<svg class="a" style="left:1425px;top:143px" width="15" height="26"><polygon points="3,10 12,10 7.5,16" fill="#b8b8b8"/></svg>

<!-- pivot table -->
<div class="a" style="left:23px;top:224px;width:320px;height:16px;background:#d9e1f2"></div>
<div class="a" style="left:23px;top:240px;width:320px;height:1px;background:#8ea9db"></div>
<div class="a" style="left:23px;top:241px;width:320px;height:47px;background:#fff"></div>
<div class="a" style="left:23px;top:288px;width:320px;height:1px;background:#8ea9db"></div>
<div class="a" style="left:23px;top:289px;width:320px;height:15px;background:#d9e1f2"></div>
<div class="a" style="left:111px;top:224.5px;width:16px;height:15px;background:#fff;border:1px solid #a6a6a6"></div>
<svg class="a" style="left:111px;top:224px" width="16" height="16"><polygon points="4.3,6 12,6 8.15,11.3" fill="#7a7a7a"/></svg>
<div class="t" style="left:25px;top:228.5px;font-size:10.3px;font-weight:bold;color:#000;letter-spacing:-0.1px">Etichette di riga</div>
<div class="t" style="left:130px;top:228.5px;font-size:10.3px;font-weight:bold;color:#000;letter-spacing:-0.08px">Conteggio di Genere</div>
<div class="t" style="left:244px;top:228.5px;font-size:10.3px;font-weight:bold;color:#000;letter-spacing:0.15px">Somma di Vendite</div>
<div class="t" style="left:25px;top:244px;font-size:10.8px;color:#000">Gennaio</div>
<div class="t" style="left:25px;top:260px;font-size:10.8px;color:#000">Febbraio</div>
<div class="t" style="left:25px;top:276px;font-size:10.8px;color:#000">Marzo</div>
<div class="t" style="left:25px;top:292.5px;font-size:10.3px;font-weight:bold;color:#000;letter-spacing:-0.1px">Totale complessivo</div>
<div class="t" style="left:140px;top:244px;width:99px;text-align:right;font-size:10.5px;color:#000">3</div>
<div class="t" style="left:140px;top:260px;width:99px;text-align:right;font-size:10.5px;color:#000">3</div>
<div class="t" style="left:140px;top:276px;width:99px;text-align:right;font-size:10.5px;color:#000">3</div>
<div class="t" style="left:140px;top:292px;width:99px;text-align:right;font-size:10.5px;font-weight:bold;color:#000">9</div>
<div class="t" style="left:240px;top:244px;width:100.5px;text-align:right;font-size:10.5px;color:#000">46700</div>
<div class="t" style="left:240px;top:260px;width:100.5px;text-align:right;font-size:10.5px;color:#000">6438</div>
<div class="t" style="left:240px;top:276px;width:100.5px;text-align:right;font-size:10.5px;color:#000">6649</div>
<div class="t" style="left:240px;top:292px;width:100.5px;text-align:right;font-size:10.5px;font-weight:bold;color:#000">59787</div>
<!-- selection D4 -->
<div class="a" style="left:342.5px;top:239.5px;width:101px;height:18px;border:2px solid #2f6b34"></div>
<div class="a" style="left:440px;top:254px;width:6px;height:6px;background:#2f6b34"></div>

<svg class="a" style="left:0;top:0" width="800" height="800">
<rect x="32.5" y="330.5" width="379" height="216" fill="#fff" stroke="#d9d9d9"/>
<path d="M68.8 522.5 H287" stroke="#d9d9d9" stroke-width="1"/>
<text x="61" y="525.2" font-family="Liberation Sans" fill="#4a4a4a" stroke="#4a4a4a" stroke-width="0.2" font-size="8.6" letter-spacing="-0.25" text-anchor="end">0</text>
<path d="M68.8 504.5 H287" stroke="#d9d9d9" stroke-width="1"/>
<text x="61" y="507.0" font-family="Liberation Sans" fill="#4a4a4a" stroke="#4a4a4a" stroke-width="0.2" font-size="8.6" letter-spacing="-0.25" text-anchor="end">5000</text>
<path d="M68.8 486.5 H287" stroke="#d9d9d9" stroke-width="1"/>
<text x="61" y="488.8" font-family="Liberation Sans" fill="#4a4a4a" stroke="#4a4a4a" stroke-width="0.2" font-size="8.6" letter-spacing="-0.25" text-anchor="end">10000</text>
<path d="M68.8 468.5 H287" stroke="#d9d9d9" stroke-width="1"/>
<text x="61" y="470.6" font-family="Liberation Sans" fill="#4a4a4a" stroke="#4a4a4a" stroke-width="0.2" font-size="8.6" letter-spacing="-0.25" text-anchor="end">15000</text>
<path d="M68.8 449.5 H287" stroke="#d9d9d9" stroke-width="1"/>
<text x="61" y="452.4" font-family="Liberation Sans" fill="#4a4a4a" stroke="#4a4a4a" stroke-width="0.2" font-size="8.6" letter-spacing="-0.25" text-anchor="end">20000</text>
<path d="M68.8 431.5 H287" stroke="#d9d9d9" stroke-width="1"/>
<text x="61" y="434.2" font-family="Liberation Sans" fill="#4a4a4a" stroke="#4a4a4a" stroke-width="0.2" font-size="8.6" letter-spacing="-0.25" text-anchor="end">25000</text>
<path d="M68.8 413.5 H287" stroke="#d9d9d9" stroke-width="1"/>
<text x="61" y="416.0" font-family="Liberation Sans" fill="#4a4a4a" stroke="#4a4a4a" stroke-width="0.2" font-size="8.6" letter-spacing="-0.25" text-anchor="end">30000</text>
<path d="M68.8 395.5 H287" stroke="#d9d9d9" stroke-width="1"/>
<text x="61" y="397.8" font-family="Liberation Sans" fill="#4a4a4a" stroke="#4a4a4a" stroke-width="0.2" font-size="8.6" letter-spacing="-0.25" text-anchor="end">35000</text>
<path d="M68.8 377.5 H287" stroke="#d9d9d9" stroke-width="1"/>
<text x="61" y="379.6" font-family="Liberation Sans" fill="#4a4a4a" stroke="#4a4a4a" stroke-width="0.2" font-size="8.6" letter-spacing="-0.25" text-anchor="end">40000</text>
<path d="M68.8 358.5 H287" stroke="#d9d9d9" stroke-width="1"/>
<text x="61" y="361.4" font-family="Liberation Sans" fill="#4a4a4a" stroke="#4a4a4a" stroke-width="0.2" font-size="8.6" letter-spacing="-0.25" text-anchor="end">45000</text>
<path d="M68.8 340.5 H287" stroke="#d9d9d9" stroke-width="1"/>
<text x="61" y="343.2" font-family="Liberation Sans" fill="#4a4a4a" stroke="#4a4a4a" stroke-width="0.2" font-size="8.6" letter-spacing="-0.25" text-anchor="end">50000</text>
<polyline points="104.4,521.5 177.5,521.5 250.2,521.5" fill="none" stroke="#4f6fc3" stroke-width="2"/>
<circle cx="104.4" cy="521.5" r="2.4" fill="#4f6fc3"/>
<circle cx="177.5" cy="521.5" r="2.4" fill="#4f6fc3"/>
<circle cx="250.2" cy="521.5" r="2.4" fill="#4f6fc3"/>
<polyline points="104.4,352.3 177.5,498.9 250.2,498.1" fill="none" stroke="#d67a37" stroke-width="2"/>
<circle cx="104.4" cy="352.3" r="2.4" fill="#d67a37"/>
<circle cx="177.5" cy="498.9" r="2.4" fill="#d67a37"/>
<circle cx="250.2" cy="498.1" r="2.4" fill="#d67a37"/>
<text x="106.0" y="537" font-family="Liberation Sans" fill="#4a4a4a" stroke="#4a4a4a" stroke-width="0.2" font-size="8.6" letter-spacing="-0.25" text-anchor="middle">Gennaio</text>
<text x="178.8" y="537" font-family="Liberation Sans" fill="#4a4a4a" stroke="#4a4a4a" stroke-width="0.2" font-size="8.6" letter-spacing="-0.25" text-anchor="middle">Febbraio</text>
<text x="251.2" y="537" font-family="Liberation Sans" fill="#4a4a4a" stroke="#4a4a4a" stroke-width="0.2" font-size="8.6" letter-spacing="-0.25" text-anchor="middle">Marzo</text>
<path d="M302 429.8 H323" stroke="#4f6fc3" stroke-width="2"/><circle cx="312.5" cy="429.8" r="2.2" fill="#4f6fc3"/>
<path d="M302 445.8 H323" stroke="#d67a37" stroke-width="2"/><circle cx="312.5" cy="445.8" r="2.2" fill="#d67a37"/>
<text x="324.6" y="432" font-family="Liberation Sans" fill="#4a4a4a" stroke="#4a4a4a" stroke-width="0.2" font-size="8.6" letter-spacing="-0.25">Conteggio di Genere</text>
<text x="324.6" y="448.5" font-family="Liberation Sans" fill="#4a4a4a" stroke="#4a4a4a" stroke-width="0.2" font-size="8.6" letter-spacing="-0.25">Somma di Vendite</text>
<rect x="424.5" y="330.5" width="358" height="216.5" fill="#fff" stroke="#d9d9d9"/>
<text x="602.5" y="350.8" font-family="Liberation Sans" fill="#4a4a4a" stroke="#4a4a4a" stroke-width="0.2" font-size="12.5" text-anchor="middle">Conteggio di Genere</text>
<path d="M575.00 452.00 L575.00 367.50 A84.5 84.5 0 0 1 648.18 494.25 Z" fill="#4f6fc3" stroke="#fff" stroke-width="0.8"/>
<path d="M575.00 452.00 L648.18 494.25 A84.5 84.5 0 0 1 501.82 494.25 Z" fill="#d67a37" stroke="#fff" stroke-width="0.8"/>
<path d="M575.00 452.00 L501.82 494.25 A84.5 84.5 0 0 1 575.00 367.50 Z" fill="#a3a3a3" stroke="#fff" stroke-width="0.8"/>
<rect x="731" y="433.3" width="5" height="4.6" fill="#4f6fc3"/>
<text x="738.3" y="438.0" font-family="Liberation Sans" fill="#4a4a4a" stroke="#4a4a4a" stroke-width="0.2" font-size="8.6" letter-spacing="-0.25">Gennaio</text>
<rect x="731" y="450.3" width="5" height="4.6" fill="#d67a37"/>
<text x="738.3" y="455.0" font-family="Liberation Sans" fill="#4a4a4a" stroke="#4a4a4a" stroke-width="0.2" font-size="8.6" letter-spacing="-0.25">Febbraio</text>
<rect x="731" y="467.2" width="5" height="4.6" fill="#a3a3a3"/>
<text x="738.3" y="471.8" font-family="Liberation Sans" fill="#4a4a4a" stroke="#4a4a4a" stroke-width="0.2" font-size="8.6" letter-spacing="-0.25">Marzo</text>
<rect x="29.5" y="562.5" width="374" height="214.5" fill="#fff" stroke="#d9d9d9"/>
<path d="M84.9 727.0 L100.5 715.2 L274.4 737.3" fill="none" stroke="#d9d9d9" stroke-width="1"/>
<text x="76.3" y="729.9" font-family="Liberation Sans" fill="#4a4a4a" stroke="#4a4a4a" stroke-width="0.2" font-size="8.6" letter-spacing="-0.25" text-anchor="end">0</text>
<path d="M84.2 712.2 L100.0 701.1 L275.0 721.9" fill="none" stroke="#d9d9d9" stroke-width="1"/>
<text x="75.7" y="715.3" font-family="Liberation Sans" fill="#4a4a4a" stroke="#4a4a4a" stroke-width="0.2" font-size="8.6" letter-spacing="-0.25" text-anchor="end">5000</text>
<path d="M83.4 697.4 L99.6 687.0 L275.6 706.6" fill="none" stroke="#d9d9d9" stroke-width="1"/>
<text x="75.1" y="700.7" font-family="Liberation Sans" fill="#4a4a4a" stroke="#4a4a4a" stroke-width="0.2" font-size="8.6" letter-spacing="-0.25" text-anchor="end">10000</text>
<path d="M82.7 682.6 L99.2 672.9 L276.2 691.2" fill="none" stroke="#d9d9d9" stroke-width="1"/>
<text x="74.5" y="686.0" font-family="Liberation Sans" fill="#4a4a4a" stroke="#4a4a4a" stroke-width="0.2" font-size="8.6" letter-spacing="-0.25" text-anchor="end">15000</text>
<path d="M82.0 667.8 L98.7 658.8 L276.8 675.9" fill="none" stroke="#d9d9d9" stroke-width="1"/>
<text x="73.9" y="671.4" font-family="Liberation Sans" fill="#4a4a4a" stroke="#4a4a4a" stroke-width="0.2" font-size="8.6" letter-spacing="-0.25" text-anchor="end">20000</text>
<path d="M81.2 653.0 L98.2 644.7 L277.4 660.5" fill="none" stroke="#d9d9d9" stroke-width="1"/>
<text x="73.2" y="656.8" font-family="Liberation Sans" fill="#4a4a4a" stroke="#4a4a4a" stroke-width="0.2" font-size="8.6" letter-spacing="-0.25" text-anchor="end">25000</text>
<path d="M80.5 638.2 L97.8 630.6 L278.1 645.1" fill="none" stroke="#d9d9d9" stroke-width="1"/>
<text x="72.6" y="642.2" font-family="Liberation Sans" fill="#4a4a4a" stroke="#4a4a4a" stroke-width="0.2" font-size="8.6" letter-spacing="-0.25" text-anchor="end">30000</text>
<path d="M79.8 623.4 L97.3 616.5 L278.7 629.8" fill="none" stroke="#d9d9d9" stroke-width="1"/>
<text x="72.0" y="627.6" font-family="Liberation Sans" fill="#4a4a4a" stroke="#4a4a4a" stroke-width="0.2" font-size="8.6" letter-spacing="-0.25" text-anchor="end">35000</text>
<path d="M79.1 608.6 L96.9 602.4 L279.3 614.4" fill="none" stroke="#d9d9d9" stroke-width="1"/>
<text x="71.4" y="612.9" font-family="Liberation Sans" fill="#4a4a4a" stroke="#4a4a4a" stroke-width="0.2" font-size="8.6" letter-spacing="-0.25" text-anchor="end">40000</text>
<path d="M78.3 593.8 L96.5 588.3 L279.9 599.1" fill="none" stroke="#d9d9d9" stroke-width="1"/>
<text x="70.8" y="598.3" font-family="Liberation Sans" fill="#4a4a4a" stroke="#4a4a4a" stroke-width="0.2" font-size="8.6" letter-spacing="-0.25" text-anchor="end">45000</text>
<path d="M77.6 579.0 L96.0 574.2 L280.5 583.7" fill="none" stroke="#d9d9d9" stroke-width="1"/>
<text x="70.2" y="583.7" font-family="Liberation Sans" fill="#4a4a4a" stroke="#4a4a4a" stroke-width="0.2" font-size="8.6" letter-spacing="-0.25" text-anchor="end">50000</text>
<path d="M84.9 727 L267 751.4" fill="none" stroke="#d9d9d9" stroke-width="1"/>
<polygon points="104.5,726.5 110,722 117,722.5 117,727.5" fill="#3f5fb0"/>
<polygon points="161,734 167,729 175.4,729.5 175.4,735" fill="#3f5fb0"/>
<polygon points="221.8,741.5 228,736 237.2,736.5 237.2,742.5" fill="#3f5fb0"/>
<polygon points="113.75,589.75 128,590.5 131.4,728.7 116.7,728.2" fill="#d67a37"/>
<polygon points="128,590.5 134,588.2 136.3,723.8 131.4,728.7" fill="#8a5228"/>
<polygon points="113.75,589.75 119,587.2 134,588.2 128,590.5" fill="#b0622a"/>
<polygon points="175.4,716.2 189.3,717.3 189.3,736 175.4,734.8" fill="#d67a37"/>
<polygon points="189.3,717.3 194.2,714.5 194.2,731 189.3,736" fill="#8a5228"/>
<polygon points="175.4,716.2 178.5,712.8 194.2,714.5 189.3,717.3" fill="#b0622a"/>
<polygon points="237.2,722.6 252.4,723.6 252.4,744 237.2,742.5" fill="#d67a37"/>
<polygon points="252.4,723.6 256.5,720.8 256.5,739.5 252.4,744" fill="#8a5228"/>
<polygon points="237.2,722.6 241,719.7 256.5,720.8 252.4,723.6" fill="#b0622a"/>
<text x="112.5" y="746.8" font-family="Liberation Sans" fill="#4a4a4a" stroke="#4a4a4a" stroke-width="0.2" font-size="8.6" letter-spacing="-0.25" text-anchor="middle">Gennaio</text>
<text x="171.3" y="755.8" font-family="Liberation Sans" fill="#4a4a4a" stroke="#4a4a4a" stroke-width="0.2" font-size="8.6" letter-spacing="-0.25" text-anchor="middle">Febbraio</text>
<text x="233.5" y="763.8" font-family="Liberation Sans" fill="#4a4a4a" stroke="#4a4a4a" stroke-width="0.2" font-size="8.6" letter-spacing="-0.25" text-anchor="middle">Marzo</text>
<rect x="309" y="659" width="5" height="5" fill="#4f6fc3"/><rect x="309" y="676" width="5" height="5" fill="#d67a37"/>
<text x="316.5" y="664" font-family="Liberation Sans" fill="#4a4a4a" stroke="#4a4a4a" stroke-width="0.2" font-size="8.6" letter-spacing="-0.25">Conteggio di Genere</text>
<text x="316.5" y="681" font-family="Liberation Sans" fill="#4a4a4a" stroke="#4a4a4a" stroke-width="0.2" font-size="8.6" letter-spacing="-0.25">Somma di Vendite</text>
<rect x="420.5" y="565.5" width="357" height="221.5" fill="#fff" stroke="#d9d9d9"/>
<path d="M457.2 764.5 H655.6" stroke="#d9d9d9" stroke-width="1"/>
<text x="449" y="766.7" font-family="Liberation Sans" fill="#4a4a4a" stroke="#4a4a4a" stroke-width="0.2" font-size="8.6" letter-spacing="-0.25" text-anchor="end">0</text>
<path d="M457.2 745.5 H655.6" stroke="#d9d9d9" stroke-width="1"/>
<text x="449" y="747.8" font-family="Liberation Sans" fill="#4a4a4a" stroke="#4a4a4a" stroke-width="0.2" font-size="8.6" letter-spacing="-0.25" text-anchor="end">5000</text>
<path d="M457.2 726.5 H655.6" stroke="#d9d9d9" stroke-width="1"/>
<text x="449" y="729.0" font-family="Liberation Sans" fill="#4a4a4a" stroke="#4a4a4a" stroke-width="0.2" font-size="8.6" letter-spacing="-0.25" text-anchor="end">10000</text>
<path d="M457.2 707.5 H655.6" stroke="#d9d9d9" stroke-width="1"/>
<text x="449" y="710.1" font-family="Liberation Sans" fill="#4a4a4a" stroke="#4a4a4a" stroke-width="0.2" font-size="8.6" letter-spacing="-0.25" text-anchor="end">15000</text>
<path d="M457.2 688.5 H655.6" stroke="#d9d9d9" stroke-width="1"/>
<text x="449" y="691.3" font-family="Liberation Sans" fill="#4a4a4a" stroke="#4a4a4a" stroke-width="0.2" font-size="8.6" letter-spacing="-0.25" text-anchor="end">20000</text>
<path d="M457.2 670.5 H655.6" stroke="#d9d9d9" stroke-width="1"/>
<text x="449" y="672.4" font-family="Liberation Sans" fill="#4a4a4a" stroke="#4a4a4a" stroke-width="0.2" font-size="8.6" letter-spacing="-0.25" text-anchor="end">25000</text>
<path d="M457.2 651.5 H655.6" stroke="#d9d9d9" stroke-width="1"/>
<text x="449" y="653.6" font-family="Liberation Sans" fill="#4a4a4a" stroke="#4a4a4a" stroke-width="0.2" font-size="8.6" letter-spacing="-0.25" text-anchor="end">30000</text>
<path d="M457.2 632.5 H655.6" stroke="#d9d9d9" stroke-width="1"/>
<text x="449" y="634.7" font-family="Liberation Sans" fill="#4a4a4a" stroke="#4a4a4a" stroke-width="0.2" font-size="8.6" letter-spacing="-0.25" text-anchor="end">35000</text>
<path d="M457.2 613.5 H655.6" stroke="#d9d9d9" stroke-width="1"/>
<text x="449" y="615.9" font-family="Liberation Sans" fill="#4a4a4a" stroke="#4a4a4a" stroke-width="0.2" font-size="8.6" letter-spacing="-0.25" text-anchor="end">40000</text>
<path d="M457.2 594.5 H655.6" stroke="#d9d9d9" stroke-width="1"/>
<text x="449" y="597.0" font-family="Liberation Sans" fill="#4a4a4a" stroke="#4a4a4a" stroke-width="0.2" font-size="8.6" letter-spacing="-0.25" text-anchor="end">45000</text>
<path d="M457.2 575.5 H655.6" stroke="#d9d9d9" stroke-width="1"/>
<text x="449" y="578.2" font-family="Liberation Sans" fill="#4a4a4a" stroke="#4a4a4a" stroke-width="0.2" font-size="8.6" letter-spacing="-0.25" text-anchor="end">50000</text>
<polygon points="457.2,587.7 556.6,739.5 656,738.7 656,763.5 457.2,763.5" fill="#d67a37"/>
<text x="457.0" y="779.3" font-family="Liberation Sans" fill="#4a4a4a" stroke="#4a4a4a" stroke-width="0.2" font-size="8.6" letter-spacing="-0.25" text-anchor="middle">Gennaio</text>
<text x="556.8" y="779.3" font-family="Liberation Sans" fill="#4a4a4a" stroke="#4a4a4a" stroke-width="0.2" font-size="8.6" letter-spacing="-0.25" text-anchor="middle">Febbraio</text>
<text x="656.2" y="779.3" font-family="Liberation Sans" fill="#4a4a4a" stroke="#4a4a4a" stroke-width="0.2" font-size="8.6" letter-spacing="-0.25" text-anchor="middle">Marzo</text>
<rect x="683" y="665" width="5" height="5" fill="#4f6fc3"/><rect x="683" y="682" width="5" height="5" fill="#d67a37"/>
<text x="690.5" y="670.6" font-family="Liberation Sans" fill="#4a4a4a" stroke="#4a4a4a" stroke-width="0.2" font-size="8.6" letter-spacing="-0.25">Conteggio di Genere</text>
<text x="690.5" y="687.3" font-family="Liberation Sans" fill="#4a4a4a" stroke="#4a4a4a" stroke-width="0.2" font-size="8.6" letter-spacing="-0.25">Somma di Vendite</text>
</svg>
<!-- sheet tabs -->
<div class="a" style="left:0;top:851px;width:1440px;height:26px;background:#353535"></div>
<div class="a" style="left:0;top:851px;width:60px;height:26px;background:#2e2e2e"></div>
<div class="a" style="left:60px;top:851px;width:395px;height:26px;background:#222222"></div>
<div class="a" style="left:455px;top:851px;width:39px;height:26px;background:#2e2e2e"></div>
<svg class="a" style="left:0;top:851px" width="500" height="26">
  <polygon points="22.5,9.5 22.5,19 14.5,14.25" fill="#686868"/>
  <polygon points="37.5,9.5 37.5,19 45.5,14.25" fill="#686868"/>
  <path d="M60.5 2 V24 M139.5 3 V23 M218.5 3 V23 M455.5 3 V23 M493.5 3 V23" stroke="#4a4a4a" stroke-width="1"/>
  <path d="M470 14.5 H480.5 M475.25 9.2 V19.8" stroke="#e0e0e0" stroke-width="1.8"/>
</svg>
<div class="a" style="left:298px;top:851px;width:78px;height:22px;background:#fff;border-radius:0 0 4px 4px"></div>
<div class="a" style="left:298px;top:873px;width:78px;height:4px;background:#3a3a3a"></div>
<div class="t" style="left:80px;top:857.5px;font-size:12.2px;color:#8e8e8e;-webkit-text-stroke:0.2px #8e8e8e">Foglio7</div>
<div class="t" style="left:158px;top:857.5px;font-size:12.2px;color:#8e8e8e;-webkit-text-stroke:0.2px #8e8e8e">Foglio8</div>
<div class="t" style="left:237.5px;top:857.5px;font-size:12.2px;color:#8e8e8e;-webkit-text-stroke:0.2px #8e8e8e">Foglio1</div>
<div class="t" style="left:316.5px;top:857.5px;font-size:12.2px;color:#3d7d44;-webkit-text-stroke:0.45px #3d7d44">Foglio5</div>
<div class="t" style="left:395px;top:857.5px;font-size:12.2px;color:#8e8e8e;-webkit-text-stroke:0.2px #8e8e8e">Foglio6</div>
<!-- status bar -->
<div class="a" style="left:0;top:877px;width:1440px;height:1px;background:#101010"></div>
<div class="a" style="left:0;top:878px;width:1440px;height:22px;background:linear-gradient(90deg,#3a3a3a,#474747 40%,#4a4a4a 70%,#434343)"></div>
<div class="t" style="left:24.5px;top:882.5px;font-size:12.4px;color:#ececec;-webkit-text-stroke:0.2px #ececec">Pronto</div>
<svg class="a" style="left:78px;top:878px" width="22" height="22" fill="none" stroke="#e0e0e0" stroke-width="1">
  <circle cx="9" cy="4.5" r="2"/>
  <path d="M3.5 6.5 L9 8 L14.5 6.5 M9 8 V12 L6 18 M9 12 L11 14"/>
  <path d="M11.5 13 L17 18.5 M17 13 L11.5 18.5"/>
</svg>
<div class="t" style="left:99.5px;top:882.5px;font-size:12.8px;color:#ececec;-webkit-text-stroke:0.2px #ececec">Accessibilità: verifica</div>
<div class="a" style="left:1121px;top:878px;width:37px;height:22px;background:#575757"></div>
<svg class="a" style="left:1120px;top:878px" width="320" height="22" fill="none" stroke="#f0f0f0" stroke-width="1">
  <path d="M12.5 3.5 H26.5 V17.5 H12.5 Z M12.5 7 H26.5 M12.5 10.5 H26.5 M12.5 14 H26.5 M16 3.5 V17.5 M19.5 3.5 V17.5 M23 3.5 V17.5"/>
  <path d="M47.5 3.5 H61.5 V17.5 H47.5 Z M50.5 6.5 H58.5 V14.5 H50.5 Z M52.5 8.5 H56.5 M52.5 10.5 H56.5 M52.5 12.5 H56.5"/>
  <path d="M84.5 17.5 V3.5 H98.5 V17.5 H84.5 M84.5 9.5 H91.5 V3.5 M88 3.5 V9.5" stroke-width="1"/>
  <path d="M117 10.2 H125" stroke-width="2"/>
  <path d="M239 10.2 H247.5 M243.25 6 V14.5" stroke-width="2"/>
</svg>
<div class="a" style="left:1252px;top:886.5px;width:100px;height:4px;border-radius:2px;background:#808080"></div>
<div class="a" style="left:1293.5px;top:881px;width:15px;height:15px;border-radius:50%;background:#a8a8a8"></div>
<div class="t" style="left:1384px;top:882.5px;font-size:12.1px;color:#ececec;-webkit-text-stroke:0.2px #ececec">100%</div>

</body></html>
